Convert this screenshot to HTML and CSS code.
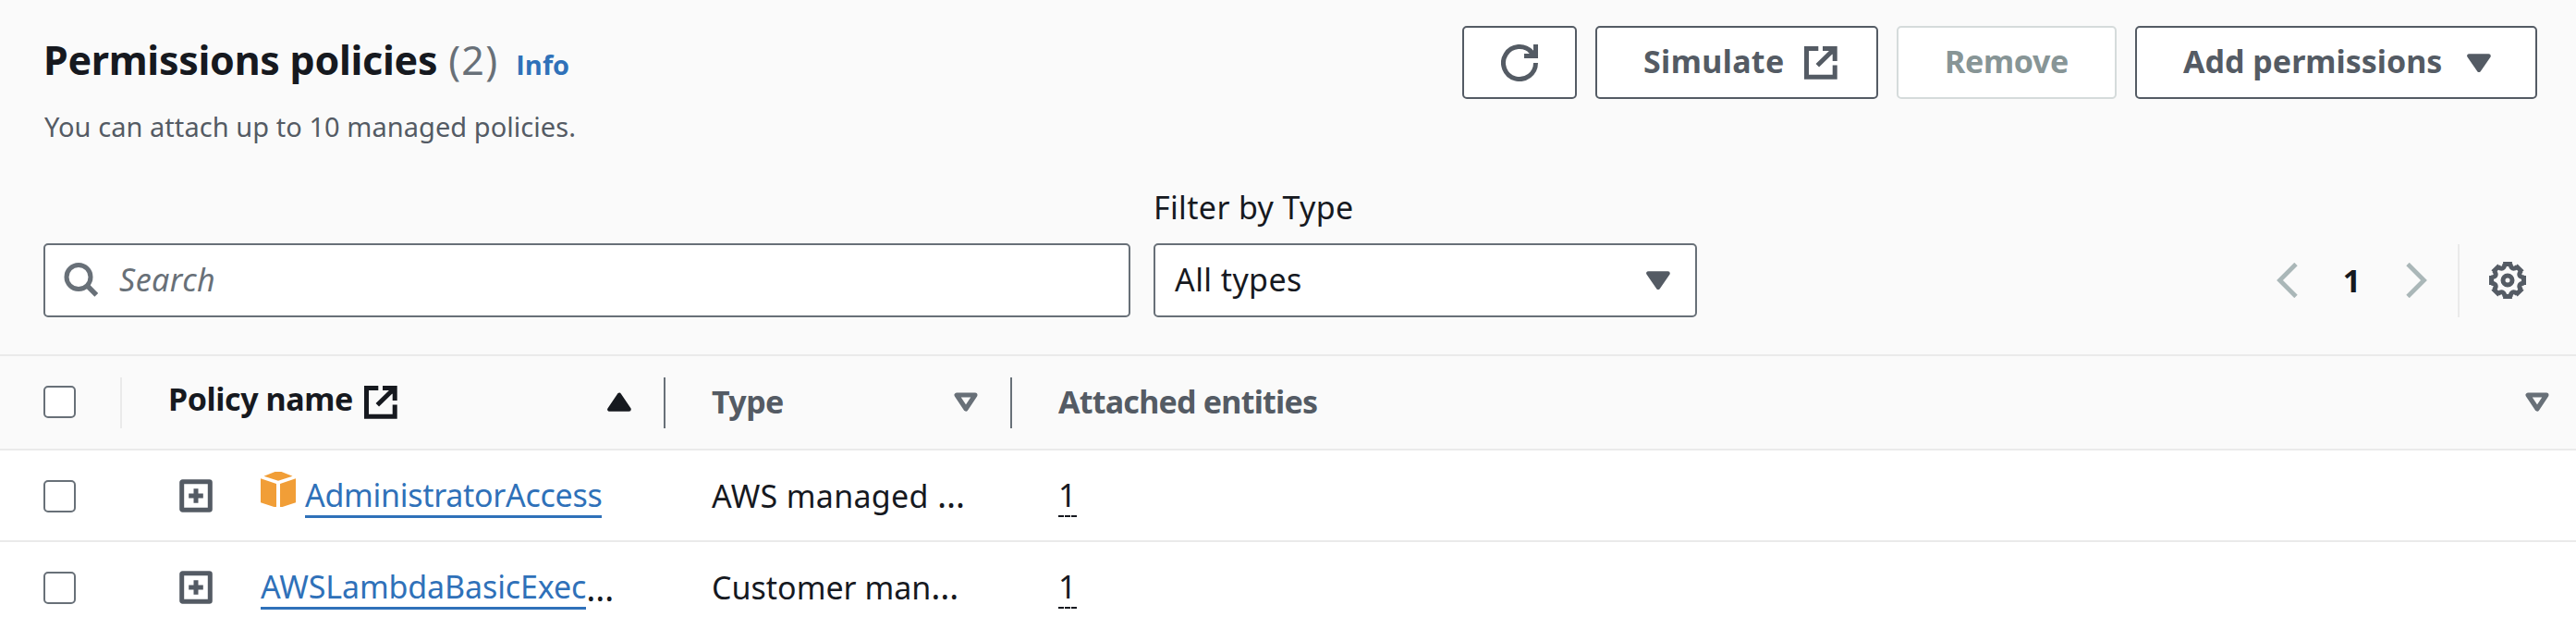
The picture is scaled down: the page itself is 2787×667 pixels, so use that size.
FILE: index.html
```html
<!DOCTYPE html>
<html lang="en">
<head>
<meta charset="utf-8">
<title>Permissions policies</title>
<link rel="stylesheet" href="styles.css">
</head>
<body>
<svg class="sprite" aria-hidden="true">
  <symbol id="external" viewBox="0 0 36 36">
    <path d="M15.3 2.5H2.5V33.2H33.2V20.5M20 2.5H33.2V16M14.3 20.7L32 3.5" fill="none" stroke="currentColor" stroke-width="5"/>
    <path d="M25 3H33V11Z" fill="currentColor"/>
  </symbol>
  <symbol id="down" viewBox="0 0 26 20">
    <path d="M2.5 2.5H23.5L13 17.8Z" fill="currentColor" stroke="currentColor" stroke-width="4.6" stroke-linejoin="round"/>
  </symbol>
  <symbol id="down-outline" viewBox="0 0 26 21">
    <path d="M3 3H23L13 18Z" fill="none" stroke="currentColor" stroke-width="5" stroke-linejoin="round"/>
  </symbol>
  <symbol id="expand" viewBox="0 0 36 36">
    <rect x="2.7" y="2.7" width="30.6" height="30.6" rx=".8" fill="none" stroke="currentColor" stroke-width="5"/>
    <path d="M10.2 18H25.8M18 10.2V25.8" stroke="currentColor" stroke-width="5"/>
  </symbol>
</svg>

<main class="panel">
  <header class="top">
    <div class="heading">
      <div>
        <h2 class="title"><span class="title-text">Permissions policies</span><span class="count">(2)</span><a class="info">Info</a></h2>
        <p class="description">You can attach up to 10 managed policies.</p>
      </div>
      <div class="actions">
        <button class="button refresh" aria-label="Refresh">
          <svg class="icon-40" viewBox="0 0 40 40"><path d="M37.5 20A17.5 17.5 0 1 1 33 8.3" fill="none" stroke="currentColor" stroke-width="5"/><path d="M35 0H40V15H25V10H31L29 8L33 5L35 7Z" fill="currentColor"/></svg>
        </button>
        <button class="button simulate"><span class="simulate-text">Simulate</span><svg class="icon-36"><use href="#external"/></svg></button>
        <button class="button remove" disabled><span>Remove</span></button>
        <button class="button add"><span>Add permissions</span><svg class="caret"><use href="#down"/></svg></button>
      </div>
    </div>

    <div class="tools">
      <div class="search">
        <svg class="search-icon" viewBox="0 0 38 38"><circle cx="16" cy="15.5" r="13" fill="none" stroke="currentColor" stroke-width="5"/><path d="M24.5 24L35.3 34.8" stroke="currentColor" stroke-width="5.4"/></svg>
        <span class="placeholder">Search</span>
      </div>
      <div class="filter">
        <label class="filter-label">Filter by Type</label>
        <div class="select"><span class="select-text">All types</span><svg class="caret"><use href="#down"/></svg></div>
      </div>
      <nav class="pages">
        <svg class="chevron" viewBox="0 0 23 38"><path d="M21 1.5L3.5 19L21 36.5" fill="none" stroke="currentColor" stroke-width="4.8"/></svg>
        <b class="page">1</b>
        <svg class="chevron" viewBox="0 0 23 38"><path d="M2 1.5L19.5 19L2 36.5" fill="none" stroke="currentColor" stroke-width="4.8"/></svg>
        <span class="settings">
          <svg class="icon-40" viewBox="-20 -20 40 40" fill="none" stroke="currentColor" stroke-width="5">
            <path id="tooth" d="M-4.9 -17.5H4.9M3 -17.5Q4.1 -10 10.3 -14.5"/>
            <use href="#tooth" transform="rotate(45)"/>
            <use href="#tooth" transform="rotate(90)"/>
            <use href="#tooth" transform="rotate(135)"/>
            <use href="#tooth" transform="rotate(180)"/>
            <use href="#tooth" transform="rotate(225)"/>
            <use href="#tooth" transform="rotate(270)"/>
            <use href="#tooth" transform="rotate(315)"/>
            <circle r="5"/>
          </svg>
        </span>
      </nav>
    </div>
  </header>

  <section class="table">
    <div class="row head">
      <div class="cell check"><span class="checkbox"></span></div>
      <div class="cell name"><span class="name-text">Policy name</span><svg class="icon-36 name-link"><use href="#external"/></svg><svg class="sort up" viewBox="0 0 26 21"><path d="M2.5 18.5H23.5L13 3Z" fill="currentColor" stroke="currentColor" stroke-width="4.6" stroke-linejoin="round"/></svg></div>
      <div class="cell type"><span class="type-text">Type</span><svg class="sort"><use href="#down-outline"/></svg></div>
      <div class="cell entities"><span class="entities-text">Attached entities</span><svg class="sort"><use href="#down-outline"/></svg></div>
    </div>
    <div class="row">
      <div class="cell check"><span class="checkbox"></span></div>
      <div class="cell name">
        <svg class="icon-36 expand"><use href="#expand"/></svg>
        <svg class="cube" viewBox="0 0 38 38" fill="currentColor"><path d="M3.5 4.8L15.5 0H22.5L34.5 4.8L19 9.8ZM0 7.2L17 13V38H14.5L0 33.3ZM38 7.2L21 13V38H23.5L38 33.3Z"/></svg>
        <a class="link admin">AdministratorAccess</a>
      </div>
      <div class="cell type"><span class="aws">AWS managed <span class="dots">…</span></span></div>
      <div class="cell entities"><span class="number">1</span></div>
    </div>
    <div class="row">
      <div class="cell check"><span class="checkbox"></span></div>
      <div class="cell name">
        <svg class="icon-36 expand"><use href="#expand"/></svg>
        <a class="link lambda">AWSLambdaBasicExec</a><span class="dots">…</span>
      </div>
      <div class="cell type"><span class="customer">Customer man<span class="dots">…</span></span></div>
      <div class="cell entities"><span class="number">1</span></div>
    </div>
  </section>
</main>
</body>
</html>
```
FILE: styles.css
```css
* { box-sizing: border-box; }
html, body { margin: 0; height: 667px; overflow: hidden; }
body {
  background: #fff;
  color: #16191f;
  font: 34px/44px "Noto Sans", sans-serif;
}
svg { display: block; flex: none; }
.sprite { position: absolute; width: 0; height: 0; }
.icon-40 { width: 40px; height: 40px; }
.icon-36 { width: 36px; height: 36px; }
.caret { width: 26px; height: 20px; color: #545b64; }
.panel { width: 2787px; }

.top {
  height: 385px;
  padding: 28px 42px 0 46px;
  background: #fafafa;
  border-bottom: 2px solid #eaeaea;
}
.heading { display: flex; justify-content: space-between; height: 176px; }
.title {
  display: flex;
  align-items: baseline;
  margin: 11px 0 0 1px;
  font-size: 43px;
  line-height: 52px;
}
.title-text { letter-spacing: -.29px; }
.count { margin-left: 12px; font-weight: 400; letter-spacing: 1.2px; color: #687078; }
.info {
  margin-left: 19px;
  font: 700 29px/40px "Open Sans", sans-serif;
  color: #2f71b9;
}
.description {
  margin: 26px 0 0 2px;
  font-size: 29px;
  line-height: 40px;
  letter-spacing: .05px;
  color: #545b64;
}
.actions { display: flex; gap: 20px; height: 79px; }
.button {
  display: flex;
  align-items: center;
  height: 79px;
  padding: 0 50px;
  border: 2px solid #545b64;
  border-radius: 5px;
  background: #fff;
  color: #545b64;
  font: 700 34px/44px "Noto Sans", sans-serif;
  white-space: nowrap;
}
.button span { margin-bottom: 3px; }
.refresh { width: 124px; padding: 0 40px; }
.simulate { width: 306px; gap: 21px; }
.simulate-text { letter-spacing: .37px; }
.remove {
  width: 238px;
  padding: 0 0 0 50px;
  border-color: #d5dbdb;
  color: #879596;
  letter-spacing: -.35px;
}
.add { width: 435px; gap: 27px; }

.tools { display: flex; align-items: flex-end; height: 139px; }
.search, .select {
  display: flex;
  align-items: center;
  height: 80px;
  border: 2px solid #687078;
  border-radius: 5px;
  background: #fff;
}
.search { width: 1176px; margin-left: 1px; padding-left: 20px; color: #687078; }
.search-icon { width: 38px; height: 38px; }
.placeholder { margin: 0 0 3px 22px; font-style: italic; letter-spacing: .46px; }
.filter { width: 588px; margin-left: 25px; }
.filter-label {
  display: block;
  height: 61px;
  line-height: 44px;
  letter-spacing: .35px;
}
.select { justify-content: space-between; padding: 0 27px 0 21px; }
.select-text { margin-bottom: 3px; letter-spacing: .4px; }
.pages { display: flex; align-items: center; height: 80px; margin-left: auto; }
.chevron { width: 23px; height: 38px; color: #aab7b8; }
.page { width: 117px; margin-bottom: 1px; text-align: center; }
.settings {
  display: flex;
  align-items: center;
  width: 86px;
  height: 79px;
  margin-left: 33px;
  padding-left: 32px;
  border-left: 2px solid #eaeaea;
  color: #545b64;
}

.row {
  display: grid;
  grid-template-columns: 132px 588px 375px 1fr;
  align-items: center;
  height: 99px;
  border-bottom: 2px solid #eaeaea;
}
.head {
  height: 102px;
  background: #fafafa;
  color: #545b64;
  font-weight: 700;
}
.cell { display: flex; align-items: center; height: 55px; white-space: nowrap; }
.head .cell { border-right: 2px solid #687078; }
.head .check { border-color: #eaeaea; }
.head .entities { border-right: 0; }
.check { padding-left: 47px; }
.checkbox {
  width: 35px;
  height: 35px;
  margin-top: 1px;
  border: 2px solid #687078;
  border-radius: 5px;
  background: #fff;
}
.head .checkbox { margin: 0 0 2px; }
.head .name { padding: 0 35px 0 50px; color: #16191f; }
.name-text { margin-bottom: 9px; letter-spacing: -.41px; }
.name-link { margin-left: 12px; }
.sort { width: 26px; height: 21px; margin: 0 0 1px auto; color: #687078; }
.sort.up { color: #16191f; }
.type { padding: 0 35px 0 50px; }
.type-text { margin-bottom: 2px; letter-spacing: -.6px; }
.entities { padding: 0 29px 0 50px; }
.entities-text { margin-bottom: 2px; letter-spacing: -.76px; }
.name { padding-left: 62px; }
.expand { margin: 1px 52px 0 0; color: #545b64; }
.cube { width: 38px; height: 38px; margin: 0 10px 13px 0; color: #f19e37; }
.link {
  height: 48px;
  margin-top: 1px;
  line-height: 46px;
  border-bottom: 3px solid #2f71b9;
  color: #2f71b9;
}
.admin { letter-spacing: -.29px; }
.lambda { letter-spacing: -.13px; }
.aws { letter-spacing: .3px; }
.customer { letter-spacing: 0; }
.dots { font-size: 38px; line-height: 40px; }
.number {
  width: 20px;
  height: 46px;
  margin-top: 1px;
  background: repeating-linear-gradient(90deg, #16191f 0 6px, transparent 6px 7px) bottom / 20px 2px no-repeat;
}
```
